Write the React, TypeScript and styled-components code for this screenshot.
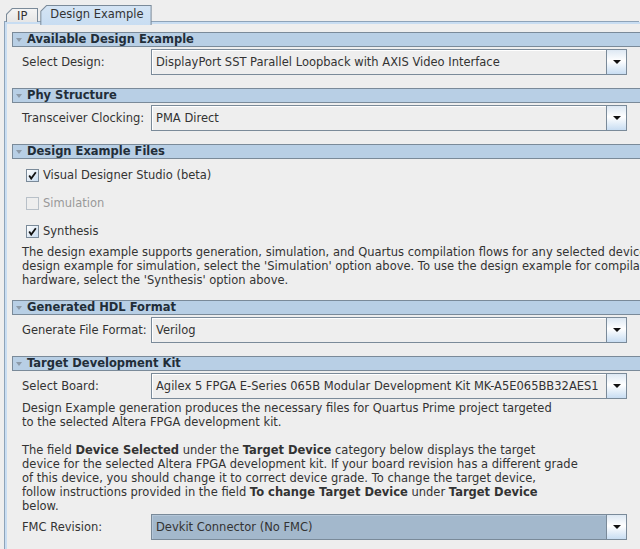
import React from "react";
import styled, { createGlobalStyle, css } from "styled-components";

const Global = createGlobalStyle`
  html, body { margin: 0; padding: 0; background: #eeeeee; overflow: hidden; }
  body { font-family: "DejaVu Sans", "Noto Sans", sans-serif; font-size: 11.5px; color: #333333; }
`;

const Window = styled.div`
  width: 640px;
  height: 549px;
  background: #eeeeee;
  overflow: hidden;
`;

const TabStrip = styled.div`
  position: relative;
  z-index: 2;
  display: flex;
  align-items: flex-end;
  gap: 2px;
  height: 22px;
  padding-left: 6px;
`;

const TabOuter = styled.div<{ $selected?: boolean }>`
  box-sizing: border-box;
  padding: 1px 1px 0 1px;
  background: #7a8a99;
  clip-path: polygon(6px 0, 100% 0, 100% 100%, 0 100%, 0 6px);
  ${(p) =>
    p.$selected
      ? css`
          height: 20px;
          margin-bottom: -3px;
        `
      : css`
          height: 14px;
        `}
`;

const TabInner = styled.div<{ $selected?: boolean }>`
  box-sizing: border-box;
  height: 100%;
  display: flex;
  align-items: flex-start;
  clip-path: polygon(5.5px 0, 100% 0, 100% 100%, 0 100%, 0 5.5px);
  background: ${(p) => (p.$selected ? "linear-gradient(#d4e4f4, #c8ddf2)" : "linear-gradient(#f4f4f4, #e6e6e6)")};
  padding: ${(p) => (p.$selected ? "1px 7px 0 9px" : "0 10px 0 10px")};
  line-height: 14px;
  color: #333333;
`;

const Panel = styled.div`
  position: relative;
  z-index: 1;
  margin-left: 5px;
  border-top: 2px solid #c8ddf2;
  border-left: 2px solid #c8ddf2;
  box-shadow: -1px -1px 0 0 #8ea3b8;
  padding: 8px 0 0 5px;
  height: 600px;
`;

const Section = styled.section`
  & + & {
    margin-top: 13px;
  }
`;

const Header = styled.div`
  box-sizing: border-box;
  width: 700px;
  height: 15px;
  border: 1px solid #7a8a99;
  background: #b8cfe5;
  display: flex;
  align-items: center;
  gap: 5px;
  padding-left: 3px;
  font-weight: bold;
  color: #222d38;
  line-height: 13px;
`;

const Triangle = styled.span`
  width: 0;
  height: 0;
  border-left: 3px solid transparent;
  border-right: 3px solid transparent;
  border-top: 4px solid #8c9aa8;
`;

const Body = styled.div`
  padding: 2px 0 0 10px;
`;

const Row = styled.div<{ $gap?: number }>`
  display: grid;
  grid-template-columns: 129px 476px;
  align-items: center;
  height: 26px;
  margin-top: ${(p) => p.$gap ?? 0}px;
`;

const Label = styled.span`
  white-space: nowrap;
`;

const Combo = styled.div<{ $selected?: boolean }>`
  box-sizing: border-box;
  height: 26px;
  display: flex;
  border: 1px solid #7a8a99;
  background: ${(p) => (p.$selected ? "#a3b8cc" : "#eeeeee")};
  box-shadow: inset 1px 1px 0 ${(p) => (p.$selected ? "#b4c6d8" : "#ffffff")};
`;

const ComboValue = styled.div`
  flex: 1;
  display: flex;
  align-items: center;
  padding-left: 4px;
  white-space: nowrap;
  overflow: hidden;
`;

const ComboButton = styled.div`
  width: 19px;
  border-left: 1px solid #7a8a99;
  background: linear-gradient(#dde8f3 0%, #ffffff 45%, #c8ddf2 100%);
  display: flex;
  align-items: center;
  justify-content: center;
`;

const Arrow = styled.span`
  width: 0;
  height: 0;
  border-left: 4px solid transparent;
  border-right: 4px solid transparent;
  border-top: 4px solid #111111;
`;

const CheckRow = styled.label<{ $disabled?: boolean }>`
  display: flex;
  align-items: center;
  gap: 4px;
  height: 28px;
  padding-left: 4px;
  color: ${(p) => (p.$disabled ? "#999999" : "#333333")};
`;

const Box = styled.span<{ $disabled?: boolean }>`
  box-sizing: border-box;
  width: 13px;
  height: 13px;
  border: 1px solid ${(p) => (p.$disabled ? "#b8c0c8" : "#7a8a99")};
  background: ${(p) =>
    p.$disabled ? "#eeeeee" : "linear-gradient(135deg, #ffffff 0%, #dde8f3 60%, #c8ddf2 100%)"};
  display: flex;
  align-items: center;
  justify-content: center;
`;

const Text = styled.div<{ $gap?: number }>`
  line-height: 14px;
  white-space: nowrap;
  margin-top: ${(p) => p.$gap ?? 0}px;
`;

const Line = styled.div`
  height: 14px;
`;

const Check = () => (
  <svg width="9" height="9" viewBox="0 0 9 9">
    <path d="M1.2 4.6 L3.2 7.6 L7.8 1.2" fill="none" stroke="#111" strokeWidth="1.8" />
  </svg>
);

const ComboField = ({ value, selected }: { value: string; selected?: boolean }) => (
  <Combo $selected={selected}>
    <ComboValue>{value}</ComboValue>
    <ComboButton>
      <Arrow />
    </ComboButton>
  </Combo>
);

const SectionHeader = ({ title }: { title: string }) => (
  <Header>
    <Triangle />
    {title}
  </Header>
);

export default function App() {
  return (
    <Window>
      <Global />
      <TabStrip>
        <TabOuter>
          <TabInner>IP</TabInner>
        </TabOuter>
        <TabOuter $selected>
          <TabInner $selected>Design Example</TabInner>
        </TabOuter>
      </TabStrip>
      <Panel>
        <Section>
          <SectionHeader title="Available Design Example" />
          <Body>
            <Row>
              <Label>Select Design:</Label>
              <ComboField value="DisplayPort SST Parallel Loopback with AXIS Video Interface" />
            </Row>
          </Body>
        </Section>
        <Section>
          <SectionHeader title="Phy Structure" />
          <Body>
            <Row>
              <Label>Transceiver Clocking:</Label>
              <ComboField value="PMA Direct" />
            </Row>
          </Body>
        </Section>
        <Section>
          <SectionHeader title="Design Example Files" />
          <Body>
            <CheckRow>
              <Box>
                <Check />
              </Box>
              Visual Designer Studio (beta)
            </CheckRow>
            <CheckRow $disabled>
              <Box $disabled />
              Simulation
            </CheckRow>
            <CheckRow>
              <Box>
                <Check />
              </Box>
              Synthesis
            </CheckRow>
            <Text>
              <Line>The design example supports generation, simulation, and Quartus compilation flows for any selected device</Line>
              <Line>design example for simulation, select the 'Simulation' option above. To use the design example for compilat</Line>
              <Line>hardware, select the 'Synthesis' option above.</Line>
            </Text>
          </Body>
        </Section>
        <Section>
          <SectionHeader title="Generated HDL Format" />
          <Body>
            <Row>
              <Label>Generate File Format:</Label>
              <ComboField value="Verilog" />
            </Row>
          </Body>
        </Section>
        <Section>
          <SectionHeader title="Target Development Kit" />
          <Body>
            <Row>
              <Label>Select Board:</Label>
              <ComboField value="Agilex 5 FPGA E-Series 065B Modular Development Kit MK-A5E065BB32AES1" />
            </Row>
            <Text $gap={2}>
              <Line>Design Example generation produces the necessary files for Quartus Prime project targeted</Line>
              <Line>to the selected Altera FPGA development kit.</Line>
              <Line />
              <Line>
                The field <b>Device Selected</b> under the <b>Target Device</b> category below displays the target
              </Line>
              <Line>
                device for the selected Altera FPGA development kit. If your board revision has a different grade
              </Line>
              <Line>of this device, you should change it to correct device grade. To change the target device,</Line>
              <Line>
                follow instructions provided in the field <b>To change Target Device</b> under <b>Target Device</b>
              </Line>
              <Line>below.</Line>
            </Text>
            <Row $gap={1}>
              <Label>FMC Revision:</Label>
              <ComboField value="Devkit Connector (No FMC)" selected />
            </Row>
          </Body>
        </Section>
      </Panel>
    </Window>
  );
}
